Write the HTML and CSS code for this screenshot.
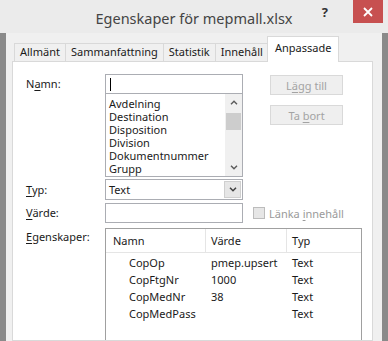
FILE: index.html
```html
<!DOCTYPE html>
<html lang="sv">
<head>
    <meta charset="UTF-8">
    <meta name="viewport" content="width=device-width, initial-scale=1.0">
    <title>Egenskaper för mepmall.xlsx</title>
    <link rel="stylesheet" href="styles.css">
</head>
<body>
    <div class="window">
        <div class="titlebar">
            <div></div>
            <div class="title">Egenskaper för mepmall.xlsx</div>
            <div class="controls">
                <span class="help">?</span>
                <span class="close">
                    <svg width="10" height="10" viewBox="0 0 10 10"><path d="M1 1 L9 9 M9 1 L1 9" stroke="#fff" stroke-width="1.8" fill="none"/></svg>
                </span>
            </div>
        </div>

        <div class="frame">
            <div class="tabs">
                <div class="tab">Allmänt</div>
                <div class="tab">Sammanfattning</div>
                <div class="tab">Statistik</div>
                <div class="tab">Innehåll</div>
                <div class="tab active">Anpassade</div>
            </div>

            <div class="panel">
                <div class="row">
                    <div class="lbl">N<u>a</u>mn:</div>
                    <div class="combo">
                        <div class="textbox"><span class="caret"></span></div>
                        <div class="listbox">
                            <ul class="items">
                                <li>Avdelning</li>
                                <li>Destination</li>
                                <li>Disposition</li>
                                <li>Division</li>
                                <li>Dokumentnummer</li>
                                <li>Grupp</li>
                            </ul>
                            <div class="scrollbar">
                                <div class="arrow">
                                    <svg width="8" height="5" viewBox="0 0 8 5"><path d="M1 4.2 L4 1.2 L7 4.2" stroke="#5a5a5a" stroke-width="1.4" fill="none"/></svg>
                                </div>
                                <div class="thumb"></div>
                                <div class="track"></div>
                                <div class="arrow">
                                    <svg width="8" height="5" viewBox="0 0 8 5"><path d="M1 0.8 L4 3.8 L7 0.8" stroke="#5a5a5a" stroke-width="1.4" fill="none"/></svg>
                                </div>
                            </div>
                        </div>
                    </div>
                    <div class="buttons">
                        <button class="btn" disabled>L<u>ä</u>gg till</button>
                        <button class="btn" disabled>Ta <u>b</u>ort</button>
                    </div>
                </div>

                <div class="row row-typ">
                    <div class="lbl lbl-typ"><u>T</u>yp:</div>
                    <div class="select">
                        <span class="select-text">Text</span>
                        <span class="drop">
                            <svg width="8" height="5" viewBox="0 0 8 5"><path d="M1 0.8 L4 3.8 L7 0.8" stroke="#404040" stroke-width="1.5" fill="none"/></svg>
                        </span>
                    </div>
                </div>

                <div class="row row-varde">
                    <div class="lbl"><u>V</u>ärde:</div>
                    <div class="textbox"></div>
                    <div class="check">
                        <span class="box"></span>
                        <span class="check-text">Länka <u>i</u>nnehåll</span>
                    </div>
                </div>

                <div class="row row-props">
                    <div class="lbl lbl-props"><u>E</u>genskaper:</div>
                    <div class="listview">
                        <div class="lv-head">
                            <div class="col">Namn</div>
                            <div class="col">Värde</div>
                            <div class="col last">Typ</div>
                        </div>
                        <div class="lv-row"><span class="c-name">CopOp</span><span class="c-val">pmep.upsert</span><span class="c-typ">Text</span></div>
                        <div class="lv-row"><span class="c-name">CopFtgNr</span><span class="c-val">1000</span><span class="c-typ">Text</span></div>
                        <div class="lv-row"><span class="c-name">CopMedNr</span><span class="c-val">38</span><span class="c-typ">Text</span></div>
                        <div class="lv-row"><span class="c-name">CopMedPass</span><span class="c-val"></span><span class="c-typ">Text</span></div>
                    </div>
                </div>
            </div>
        </div>
    </div>
</body>
</html>
```

FILE: styles.css
```css
* {
    box-sizing: border-box;
}
body {
    margin: 0;
    width: 388px;
    height: 341px;
    overflow: hidden;
    font-family: "Noto Sans", "Open Sans", sans-serif;
    font-size: 11px;
    color: #1a1a1a;
    background-color: #8a8a8a;
}
u {
    text-decoration-thickness: 1px;
    text-underline-offset: 2px;
}
.window {
    width: 388px;
    height: 341px;
    display: flex;
    flex-direction: column;
}
.titlebar {
    height: 33px;
    flex: none;
    background-color: #ebebeb;
    display: grid;
    grid-template-columns: 1fr auto 1fr;
    align-items: start;
}
.title {
    font-size: 14.5px;
    line-height: 20px;
    color: #444;
    padding-top: 8px;
}
.controls {
    display: flex;
    justify-content: flex-end;
    padding-right: 5px;
}
.help {
    font-size: 13px;
    font-weight: bold;
    color: #333;
    line-height: 16px;
    margin-top: 4px;
    margin-right: 25px;
}
.close {
    width: 30px;
    height: 23px;
    background-color: #c75050;
    display: flex;
    align-items: center;
    justify-content: center;
}
.frame {
    flex: 1;
    min-height: 0;
    margin: 0 6px;
    padding: 3px 9px 0 6px;
    background-color: #f0f0f0;
    display: flex;
    flex-direction: column;
}
.tabs {
    display: flex;
    align-items: flex-end;
    padding-left: 3px;
    position: relative;
    z-index: 1;
}
.tab {
    height: 18px;
    line-height: 16px;
    padding: 0 5px;
    margin-left: -1px;
    border: 1px solid #d9d9d9;
    border-bottom: none;
    background-color: #f0f0f0;
    white-space: nowrap;
}
.tab.active {
    height: 26px;
    padding: 3px 7px 0;
    margin: 0 0 -1px -2px;
    background-color: #fff;
}
.panel {
    flex: 1;
    min-height: 0;
    overflow: hidden;
    background-color: #fff;
    border: 1px solid #d9d9d9;
    padding: 12px 0 0 13px;
    display: flex;
    flex-direction: column;
}
.row {
    display: flex;
    align-items: flex-start;
}
.lbl {
    width: 79px;
    flex: none;
    line-height: 20px;
}
.combo {
    width: 138px;
}
.textbox {
    width: 138px;
    height: 20px;
    border: 1px solid #abadb3;
    background-color: #fff;
}
.caret {
    display: block;
    width: 1px;
    height: 13px;
    margin: 3px 0 0 4px;
    background-color: #000;
}
.listbox {
    height: 83px;
    border: 1px solid #abadb3;
    border-top: none;
    display: flex;
}
.items {
    flex: 1;
    list-style: none;
    margin: 0;
    padding: 3px 0 0 3px;
    line-height: 13px;
}
.scrollbar {
    width: 17px;
    background-color: #f0f0f0;
    display: flex;
    flex-direction: column;
    align-items: center;
}
.arrow {
    width: 17px;
    height: 17px;
    display: flex;
    align-items: center;
    justify-content: center;
}
.thumb {
    width: 15px;
    height: 17px;
    margin-top: 2px;
    background-color: #cdcdcd;
}
.track {
    flex: 1;
}
.buttons {
    margin: 1px 0 0 27px;
    display: flex;
    flex-direction: column;
    gap: 10px;
}
.btn {
    width: 73px;
    height: 20px;
    padding: 0;
    font-family: inherit;
    font-size: inherit;
    color: #a3a3a3;
    background-color: #efefef;
    border: 1px solid #d9d9d9;
}
.row-typ {
    margin-top: 2px;
}
.lbl-typ {
    line-height: 21px;
}
.select {
    width: 138px;
    height: 21px;
    border: 1px solid #abadb3;
    display: flex;
    align-items: center;
    justify-content: space-between;
    padding: 0 1px 0 3px;
}
.drop {
    width: 17px;
    height: 17px;
    background-color: #e6e6e6;
    border: 1px solid #cfcfcf;
    display: flex;
    align-items: center;
    justify-content: center;
}
.row-varde {
    margin-top: 3px;
}
.check {
    margin-left: 10px;
    height: 20px;
    display: flex;
    align-items: center;
    gap: 4px;
    color: #9a9a9a;
}
.box {
    width: 12px;
    height: 12px;
    border: 1px solid #bcbcbc;
    background-color: #e6e6e6;
}
.row-props {
    margin-top: 5px;
}
.lbl-props {
    line-height: 18px;
}
.listview {
    width: 257px;
    height: 130px;
    flex: none;
    border: 1px solid #a0a0a0;
}
.lv-head {
    display: grid;
    grid-template-columns: 100px 81px 1fr;
    height: 24px;
    border-bottom: 1px solid #e5e5e5;
    line-height: 23px;
}
.col {
    border-right: 1px solid #e5e5e5;
    padding-left: 5px;
}
.col:first-child {
    padding-left: 7px;
}
.col.last {
    border-right: none;
}
.lv-row {
    display: grid;
    grid-template-columns: 100px 81px 1fr;
    line-height: 17px;
}
.lv-head + .lv-row {
    margin-top: 1px;
}
.c-name {
    padding-left: 23px;
}
.c-val,
.c-typ {
    padding-left: 5px;
}
```
